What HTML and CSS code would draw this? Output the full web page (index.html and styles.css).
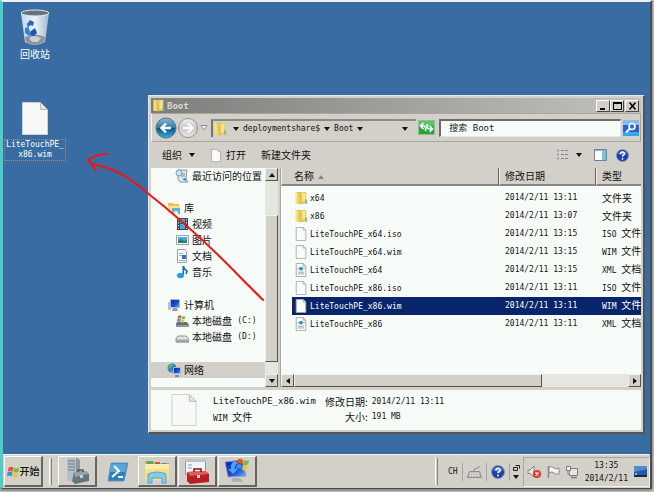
FILE: index.html
```
<!DOCTYPE html>
<html lang="zh-CN">
<head>
<meta charset="utf-8">
<title>Boot</title>
<link rel="stylesheet" href="styles.css">
</head>
<body>
<!-- 公用图标 -->
<svg class="defs" width="0" height="0">
  <defs>
    <linearGradient id="gold" x1="0" x2="1"><stop offset="0" stop-color="#f9ec9b"/><stop offset="1" stop-color="#dfb93f"/></linearGradient>
    <linearGradient id="glass" x1="0" x2="1"><stop offset="0" stop-color="#c4dcf0"/><stop offset=".5" stop-color="#f4f9fd"/><stop offset="1" stop-color="#a9bccb"/></linearGradient>
    <linearGradient id="ball" x1="0" x2="0" y1="0" y2="1"><stop offset="0" stop-color="#8fbad6"/><stop offset=".48" stop-color="#2f7ba9"/><stop offset=".52" stop-color="#0d5588"/><stop offset="1" stop-color="#35b3dc"/></linearGradient>
    <linearGradient id="grayball" x1="0" x2="0" y1="0" y2="1"><stop offset="0" stop-color="#eeeeec"/><stop offset=".5" stop-color="#c9c9c7"/><stop offset="1" stop-color="#e6e6e4"/></linearGradient>
    <linearGradient id="screenblue" x1="0" x2="1" y2="1"><stop offset="0" stop-color="#0a1fa8"/><stop offset=".6" stop-color="#1c4fe0"/><stop offset="1" stop-color="#6fb4ff"/></linearGradient>
  </defs>
  <symbol id="folder" viewBox="0 0 16 16">
    <path d="M2 1h5l1 2v12l-6-1z" fill="#e3bd48"/>
    <path d="M7 1h7v13l-6 1z" fill="#e6c658"/>
    <path d="M2 1l6 2v12l-6-1z" fill="url(#gold)"/>
    <path d="M9 2h4v10H9z" fill="#f6e48f"/>
    <path d="M13 9l2 1v4l-2 1z" fill="#79b3a0"/>
  </symbol>
  <symbol id="page" viewBox="0 0 16 16">
    <path d="M2.500.500h8l3 3v12h-11z" fill="#fbfbfa" stroke="#a8a8aa"/>
    <path d="M10.500.500v3h3" fill="#e6e6e6" stroke="#a8a8aa"/>
  </symbol>
  <symbol id="xml" viewBox="0 0 16 16">
    <path d="M2.500.500h8l3 3v12h-11z" fill="#fbfbfa" stroke="#a0a0a4"/>
    <path d="M10.500.500v3h3" fill="#e6e6e6" stroke="#a0a0a4"/>
    <path d="M3.500 6.500h2M10.500 6.500h2M4.500 10.500h7M4.500 12.500h7" stroke="#8a9cb8"/>
    <circle cx="8" cy="6.500" r="2.200" fill="#20a09a"/>
  </symbol>
  <symbol id="bigpage" viewBox="0 0 26 33">
    <path d="M.500.500h18l7 7v25H.500z" fill="#f8f8f6" stroke="#cfcfcd"/>
    <path d="M18.500.500v7h7z" fill="#e4e4e2" stroke="#b8b8b6"/>
  </symbol>
  <symbol id="help" viewBox="0 0 14 14">
    <circle cx="7" cy="7" r="6.500" fill="#1c3fae" stroke="#8795b8"/>
    <path d="M2 5a5.500 4.500 0 0 1 10 0q-5 3-10 0" fill="#5f86dc"/>
    <path d="M5 5.300a2 1.900 0 1 1 3 1.500q-1 .6-1 1.500" fill="none" stroke="#fff" stroke-width="1.600"/>
    <circle cx="7" cy="10.500" r="1" fill="#fff"/>
  </symbol>
  <symbol id="winflag" viewBox="0 0 16 16">
    <path d="M2 3q3-2 6 0l-1 5q-3-2-6 0z" fill="#e8532a"/>
    <path d="M9 3.400q3 2 6 0l-1 5q-3 2-6 0z" fill="#7cba3a"/>
    <path d="M.800 9q3-2 6 0l-1 5q-3-2-6 0z" fill="#3f8be0"/>
    <path d="M7.800 9.400q3 2 6 0l-1 5q-3 2-6 0z" fill="#f7c42c"/>
  </symbol>
</svg>

<div class="screen">
  <main class="desktop">
    <button class="shortcut bin">
      <svg width="30" height="37" viewBox="0 0 30 37">
        <path d="M1 4l4 29q10 6 20 0l4-29z" fill="url(#glass)" opacity=".95"/>
        <path d="M5 28l1 5q9 6 18 0l1-5q-10-5-20 0z" fill="#8d9399"/>
        <path d="M9 29q5-4 12 0l-3 4h-6z" fill="#c9ced2"/>
        <ellipse cx="15" cy="4" rx="14" ry="3" fill="#66737e" stroke="#e4e9ec"/>
        <path d="M7 15l3-4 4 2-1 4-3-1-2 3z" fill="#2a66c8"/>
        <path d="M5 19l3-1 3 6-2 3-4-3z" fill="#3c7ede"/>
        <path d="M11 22l4-3 2 5-3 3-4-1z" fill="#1d55b8"/>
      </svg>
      <span class="label">回收站</span>
    </button>
    <button class="shortcut wim">
      <svg width="26" height="33"><use href="#bigpage"/></svg>
      <span class="label en focused">LiteTouchPE_<br>x86.wim</span>
    </button>

    <section class="window">
      <header class="titlebar">
        <svg width="13" height="13"><use href="#folder"/></svg>
        <h1 class="caption">Boot</h1>
        <button class="ctl" aria-label="最小化"><svg width="9" height="8"><path d="M1 6h5v2H1z"/></svg></button>
        <button class="ctl" aria-label="最大化"><svg width="9" height="8"><path d="M0 0h9v8H0zM1 2v5h7V2z" fill-rule="evenodd"/></svg></button>
        <button class="ctl close" aria-label="关闭"><svg width="9" height="8"><path d="M1.500.500l6 7M7.500.500l-6 7" stroke="#000" stroke-width="1.500"/></svg></button>
      </header>

      <nav class="navbar">
        <button class="plain" aria-label="后退"><svg width="22" height="22" viewBox="0 0 22 22"><circle cx="11" cy="11" r="10" fill="url(#ball)" stroke="#5b7486"/><path d="M16 11H7M11 6.500L6.500 11l4.500 4.500" fill="none" stroke="#fff" stroke-width="2.400"/></svg></button>
        <button class="plain" aria-label="前进"><svg width="22" height="22" viewBox="0 0 22 22"><circle cx="11" cy="11" r="9.500" fill="url(#grayball)" stroke="#92928f"/><path d="M6 11h9M11 6.500l4.500 4.500-4.500 4.500" fill="none" stroke="#f8f8f8" stroke-width="2.400"/></svg></button>
        <button class="plain history" aria-label="历史"><svg width="8" height="6"><path d="M1 .500h6L4 5z" fill="#f4f6fa" stroke="#8490a8"/></svg></button>
        <div class="address">
          <svg width="14" height="14"><use href="#folder"/></svg>
          <i class="down"></i>
          <button class="plain crumb en">deploymentshare$</button>
          <i class="down"></i>
          <button class="plain crumb en">Boot</button>
          <i class="down"></i>
          <button class="plain drop" aria-label="地址列表"><i class="down"></i></button>
        </div>
        <button class="plain" aria-label="刷新"><svg width="17" height="15" viewBox="0 0 17 15"><path d="M.500.500h16v14H.500z" fill="#22a83a" stroke="#9fb39f"/><path d="M1 1h15v5H1z" fill="#58c765"/><path d="M7.500 11q1-5-2-5H4M5.500 3L2.500 6l3 3M9.500 4q-1 5 2 5H13M11.500 6l3 3-3 3" fill="none" stroke="#fff" stroke-width="1.700"/></svg></button>
        <input class="search" type="search" placeholder="搜索 Boot" aria-label="搜索 Boot">
        <button class="plain" aria-label="搜索"><svg width="16" height="16" viewBox="0 0 16 16"><path d="M0 0h16v16H0z" fill="#2763cf"/><path d="M0 0h16v5H0z" fill="#8db8ee"/><path d="M0 12h16v4H0z" fill="#35a5ee"/><circle cx="9" cy="6.500" r="3" fill="#3c6fd0" stroke="#fff" stroke-width="1.600"/><path d="M7 8.500L3 12.500" stroke="#fff" stroke-width="2"/></svg></button>
      </nav>

      <div class="toolbar">
        <button class="plain">组织 <i class="down"></i></button>
        <button class="plain open"><svg width="12" height="13" viewBox="1 0 14 16"><use href="#page" width="16" height="16"/></svg>打开</button>
        <button class="plain">新建文件夹</button>
        <span class="views">
          <button class="plain" aria-label="视图"><svg width="13" height="12" viewBox="0 0 13 12"><path d="M1 1.500h2M1 9.500h2" stroke="#8aa4c8" stroke-width="2"/><path d="M1 5.500h2" stroke="#d09090" stroke-width="2"/><path d="M5 1.500h3M9 1.500h3M5 5.500h3M9 5.500h3M5 9.500h3M9 9.500h3" stroke="#7d8794"/></svg></button>
          <button class="plain" aria-label="更多视图"><i class="down"></i></button>
          <button class="plain preview" aria-label="预览窗格"><svg width="13" height="12" viewBox="0 0 13 12"><path d="M.500.500h12v11H.500z" fill="#fff" stroke="#68849c"/><path d="M8 2h4v9H8z" fill="#72c3e4"/><path d="M1 1.500h11" stroke="#9db8cc"/></svg></button>
          <button class="plain" aria-label="帮助"><svg width="13" height="13"><use href="#help"/></svg></button>
        </span>
      </div>

      <div class="panes">
        <div class="tree">
          <ul class="group">
            <li class="child"><svg width="14" height="14" viewBox="0 0 14 14"><path d="M3 1h9l-1 9 2 3H5L3 10z" fill="#dfe6ec" stroke="#8898a4"/><path d="M6 5h4M6 7h4" stroke="#7d93a4"/><circle cx="4" cy="4" r="3" fill="#cbe4f2" stroke="#7f9fb2"/><path d="M7 10l4-1v3z" fill="#2c8fd0"/></svg>最近访问的位置</li>
          </ul>
          <ul class="group">
            <li><svg width="14" height="14" viewBox="0 0 14 14"><path d="M1 2h5l1 1h5v9H1z" fill="#e8c352"/><path d="M1 5h12v7H1z" fill="#f7e490"/><path d="M5 7h8v6h-2v-3H7v3H5z" fill="#5eb2e2"/></svg>库</li>
            <li class="child"><svg width="14" height="14" viewBox="0 0 14 14"><path d="M2 1h11v12H2z" fill="#394450"/><path d="M5 2h5v4H5zM5 7h5v5H5z" fill="#4aa6dd"/><path d="M3.500 2v10M11.500 2v10" stroke="#d4d9dc" stroke-dasharray="1.500 1.500"/></svg>视频</li>
            <li class="child"><svg width="14" height="14" viewBox="0 0 14 14"><path d="M1.500 2.500h12v9h-12z" fill="#fff" stroke="#98a4ac"/><path d="M3 4h9v6H3z" fill="#48a8e0"/><path d="M3 8l3-2 3 2 3-1v3H3z" fill="#2b7d66"/></svg>图片</li>
            <li class="child"><svg width="14" height="14" viewBox="0 0 14 14"><path d="M2.500.500h7l2 2v11h-9z" fill="#fcfdfd" stroke="#98a4ac"/><path d="M4 4.500h4M4 6.500h3M4 11.500h6" stroke="#98b0c8"/><path d="M7 6h4v4H7z" fill="#2f73b8"/></svg>文档</li>
            <li class="child"><svg width="14" height="14" viewBox="0 0 14 14"><path d="M8.500 1q0 3 3.500 5-1 3-1 3" fill="none" stroke="#1b75d0" stroke-width="1.600"/><path d="M8.300 1v9" stroke="#1668c4" stroke-width="1.600"/><ellipse cx="5.500" cy="10.500" rx="3.500" ry="2.800" fill="#2b9ae8"/></svg>音乐</li>
          </ul>
          <ul class="group">
            <li><svg width="14" height="14" viewBox="0 0 14 14"><path d="M1 4h3v8H1z" fill="#b9c0c8"/><path d="M3.500 1.500h9v8h-9z" fill="url(#screenblue)" stroke="#b0b8c4"/><path d="M6 10h4l1 3H5z" fill="#949ca8"/></svg>计算机</li>
            <li class="child"><svg width="14" height="14" viewBox="0 0 14 14"><path d="M2 8h10l2 3v2H1v-3z" fill="#5f7078"/><path d="M1 11h13v2H1z" fill="#8a9aa0"/><path d="M11 11.500h2" stroke="#50d060"/><use href="#winflag" x="2" y="0" width="9" height="9"/></svg>本地磁盘&nbsp;<span class="en">(C:)</span></li>
            <li class="child"><svg width="14" height="14" viewBox="0 0 14 14"><path d="M3 6h8l3 3v3H1V9z" fill="#e3e5e5" stroke="#8d9292"/><path d="M1 9.500h13v3H1z" fill="#9fa3a3"/><path d="M10.500 11h2" stroke="#40d050"/></svg>本地磁盘&nbsp;<span class="en">(D:)</span></li>
          </ul>
          <ul class="group">
            <li class="current"><svg width="14" height="14" viewBox="0 0 14 14"><circle cx="5" cy="5" r="4.500" fill="#2a80d8"/><path d="M2 2q3-2 4 0l-2 3-3 1zM3 7l3 1-1 2z" fill="#4cc050"/><path d="M6.500 4.500h7v6h-7z" fill="url(#screenblue)" stroke="#a5b4d0"/><path d="M8 12h4v2H8z" fill="#7888a8"/></svg>网络</li>
          </ul>
        </div>
        <div class="scroll vertical">
          <button class="arrow" aria-label="向上"><i class="up"></i></button>
          <span class="thumb"></span>
          <button class="arrow" aria-label="向下"><i class="down"></i></button>
        </div>

        <div class="list">
          <table class="files">
            <colgroup><col><col class="date"><col class="type"></colgroup>
            <thead>
              <tr><th>名称 <i class="up sort"></i></th><th>修改日期</th><th>类型</th></tr>
            </thead>
            <tbody>
              <tr><td><svg width="14" height="14"><use href="#folder"/></svg><span class="en">x64</span></td><td class="en">2014/2/11 13:11</td><td>文件夹</td></tr>
              <tr><td><svg width="14" height="14"><use href="#folder"/></svg><span class="en">x86</span></td><td class="en">2014/2/11 13:07</td><td>文件夹</td></tr>
              <tr><td><svg width="14" height="14"><use href="#page"/></svg><span class="en">LiteTouchPE_x64.iso</span></td><td class="en">2014/2/11 13:15</td><td><span class="en">ISO </span>文件</td></tr>
              <tr><td><svg width="14" height="14"><use href="#page"/></svg><span class="en">LiteTouchPE_x64.wim</span></td><td class="en">2014/2/11 13:15</td><td><span class="en">WIM </span>文件</td></tr>
              <tr><td><svg width="14" height="14"><use href="#xml"/></svg><span class="en">LiteTouchPE_x64</span></td><td class="en">2014/2/11 13:15</td><td><span class="en">XML </span>文档</td></tr>
              <tr><td><svg width="14" height="14"><use href="#page"/></svg><span class="en">LiteTouchPE_x86.iso</span></td><td class="en">2014/2/11 13:11</td><td><span class="en">ISO </span>文件</td></tr>
              <tr class="selected"><td><svg width="14" height="14"><use href="#page"/></svg><span class="en">LiteTouchPE_x86.wim</span></td><td class="en">2014/2/11 13:11</td><td><span class="en">WIM </span>文件</td></tr>
              <tr><td><svg width="14" height="14"><use href="#xml"/></svg><span class="en">LiteTouchPE_x86</span></td><td class="en">2014/2/11 13:11</td><td><span class="en">XML </span>文档</td></tr>
            </tbody>
          </table>
          <div class="scroll horizontal">
            <button class="arrow" aria-label="向左"><i class="left"></i></button>
            <span class="thumb"></span>
            <button class="arrow" aria-label="向右"><i class="right"></i></button>
          </div>
        </div>
      </div>

      <footer class="details">
        <svg width="26" height="32"><use href="#bigpage"/></svg>
        <div class="props">
          <span class="en name">LiteTouchPE_x86.wim</span><span class="key">修改日期:</span><span class="en">2014/2/11 13:11</span>
          <span><span class="en">WIM </span>文件</span><span class="key">大小:</span><span class="en">191 MB</span>
        </div>
      </footer>
    </section>

    <!-- 手绘的红色箭头 -->
    <svg class="pointer" width="180" height="152" viewBox="86 150 180 152" fill="none" stroke="#f01414" stroke-width="2" stroke-linecap="round">
      <path d="M263 300L242 279Q196 231 145 191Q122 170 93 164"/>
      <path d="M107 154Q96 154 88 160Q92 164 96 171"/>
    </svg>
  </main>

  <footer class="taskbar">
    <button class="raised start"><svg width="13" height="13"><use href="#winflag"/></svg>开始</button>
    <span class="grip"></span>
    <div class="tasks">
      <button class="raised" aria-label="服务器管理器"><svg width="26" height="28" viewBox="0 0 26 28"><path d="M3 1h10l3 2v20l-3 1H3z" fill="#8d9aa0"/><path d="M3 1h9v23H3z" fill="#b4c0c4"/><path d="M4 4h7M4 7h7M4 10h7M4 13h7" stroke="#667680"/><path d="M10 15l12-1 3 3v7l-14 3-3-3z" fill="#65757e"/><path d="M10 15l12-1 3 3-14 3z" fill="#93a3ac"/><path d="M14 15v-2h5v2" fill="none" stroke="#4a5860" stroke-width="1.500"/><path d="M16 18h3v3h-3z" fill="#c9d2d6"/></svg></button>
      <button class="flat" aria-label="PowerShell"><svg width="22" height="20" viewBox="0 0 22 20"><path d="M4 1h17l-4 18H1z" fill="#2f7fb8" stroke="#5c9cc8"/><path d="M4 2h16l-2 8H3z" fill="#5aa6d8"/><path d="M7 4l5 5-7 6M11 15h5" fill="none" stroke="#fff" stroke-width="2"/></svg></button>
      <button class="raised" aria-label="资源管理器"><svg width="28" height="26" viewBox="0 0 28 26"><path d="M2 3h8l2 2h14v17H2z" fill="#d9ac45"/><path d="M4 3h6v3H4z" fill="#4fae58"/><path d="M12 4h5v3h-5z" fill="#d85040"/><path d="M19 5h5v3h-5z" fill="#4b8dd8"/><path d="M2 6h24v16H2z" fill="#f5e08a"/><path d="M2 6h24v5H2z" fill="#faedb0"/><path d="M5 16q9-4 18 0v9h-4v-5H9v5H5z" fill="#86c9e8" stroke="#4fa4cc"/></svg></button>
      <button class="raised" aria-label="部署工作台"><svg width="26" height="28" viewBox="0 0 26 28"><path d="M1.500 2.500h20v15h-20z" fill="#f4f5f5" stroke="#8d98a0"/><path d="M1 2h21v3H1z" fill="#b8c4cc"/><path d="M4 8h4M4 11h4" stroke="#8898a0"/><path d="M3 15l18-1 4 3v8L6 27l-3-3z" fill="#b81e22"/><path d="M3 15l18-1 4 3-19 2z" fill="#e25a50"/><path d="M10 15v-3h7v3" fill="none" stroke="#7d1418" stroke-width="1.500"/><path d="M13 18h3v3h-3z" fill="#d8d8d8"/></svg></button>
      <button class="raised" aria-label="远程安装"><svg width="26" height="28" viewBox="0 0 26 28"><path d="M1 5l17-2 4 16-18 1z" fill="url(#screenblue)" stroke="#8c9cbc"/><path d="M9 21h7l3 4H7z" fill="#a8b0bc"/><path d="M11 4q-5 2-4 8H4l5 5 5-5h-3q-1-4 3-6z" fill="#4aa4f0"/><use href="#winflag" x="12" y="0" width="14" height="14"/></svg></button>
    </div>
    <span class="grip"></span>
    <div class="lang">
      <button class="plain en">CH</button>
      <button class="plain" aria-label="输入法"><svg width="15" height="14" viewBox="0 0 15 14"><path d="M2.500 6.500h10l2 6h-14z" fill="#bcbcba" stroke="#8c8c8a"/><path d="M3 8.500h9M2.500 10.500h10" stroke="#ececea" stroke-dasharray="1.500 1"/><path d="M7 6q0-3 3-3t2-2" fill="none" stroke="#8c8c8a"/></svg></button>
      <button class="plain" aria-label="帮助"><svg width="14" height="14"><use href="#help"/></svg></button>
      <button class="plain restore" aria-label="选项"><svg width="7" height="6"><path d="M2.500.500h4v3M.500 2.500h4v3h-4z" fill="none" stroke="#222"/></svg><i class="down"></i></button>
    </div>
    <div class="tray">
      <button class="plain" aria-label="音量"><svg width="15" height="14" viewBox="0 0 15 14"><path d="M1 5h2l4-4v11L3 8.500H1z" fill="#e8e8e6" stroke="#858583"/><circle cx="10" cy="9" r="4" fill="#dc3a30"/><path d="M8.500 7.500l3 3M11.500 7.500l-3 3" stroke="#fff" stroke-width="1.300"/></svg></button>
      <button class="plain" aria-label="操作中心"><svg width="15" height="14" viewBox="0 0 15 14"><path d="M2.500 1v12" stroke="#8a8a88" stroke-width="1.500"/><path d="M3 2q3-1 5 1t5 0v6q-3 1-5-1T3 8z" fill="#f4f4f2" stroke="#8a8a88"/></svg></button>
      <button class="plain" aria-label="网络"><svg width="14" height="14" viewBox="0 0 14 14"><path d="M4.500 3.500h8v7h-8z" fill="#e6e6e4" stroke="#7c7c7a"/><path d="M6 12.500h6" stroke="#7c7c7a" stroke-width="1.500"/><path d="M1.500 1.500h4v4h-4zM3 5v4h2" fill="#f0f0ee" stroke="#7c7c7a"/></svg></button>
      <time class="clock en">13:35<br>2014/2/11</time>
      <button class="plain" aria-label="显示桌面"><svg width="13" height="11" viewBox="0 0 13 11"><path d="M0 0h13v9H0z" fill="#1f5da8"/><path d="M0 0h13v3L0 6z" fill="#4d8ed0"/><path d="M0 9h13v2H0z" fill="#1a2c44"/><path d="M1 8h2" stroke="#fff"/></svg></button>
    </div>
  </footer>
</div>
</body>
</html>
```

FILE: styles.css
```
* { box-sizing: border-box; }

body {
  margin: 0;
  height: 100vh;
  overflow: hidden;
  background: #c4c4c4;
  color: #111;
  font: 10px/12px "Noto Sans CJK SC", sans-serif;
}

.defs { position: absolute; }

button, input {
  font: inherit;
  color: inherit;
}

svg { flex: none; display: block; }

/* 西文等宽字体 */
.en {
  font-family: "DejaVu Sans Mono", monospace;
  font-size: 8px;
  white-space: pre;
}

.plain, .flat {
  display: flex;
  align-items: center;
  padding: 0;
  border: 0;
  background: none;
}

/* 小三角 */
.down, .up, .left, .right {
  display: inline-block;
  border: 3px solid transparent;
}
.down { border-top: 4px solid #111; border-bottom: 0; }
.up { border-bottom: 4px solid #111; border-top: 0; }
.left { border-right: 4px solid #111; border-left: 0; }
.right { border-left: 4px solid #111; border-right: 0; }

.screen {
  display: flex;
  flex-direction: column;
  height: calc(100vh - 3px);
  margin-right: 2px;
  border: 2px solid #4a4a4a;
  border-left: 3px solid #50ccc8;
  border-top-color: #f0f0f0;
  border-bottom-width: 1px;
  box-shadow: 0 1px 3px #666;
}

/* ---- 桌面 ---- */
.desktop {
  flex: 1;
  position: relative;
  background: #386ca2;
}

.shortcut {
  position: absolute;
  left: 0;
  width: 64px;
  display: flex;
  flex-direction: column;
  align-items: center;
  gap: 4px;
  padding: 0;
  border: 0;
  background: none;
  color: #fff;
}
.bin { top: 7px; gap: 2px; }
.wim { top: 100px; }
.label { padding: 0 1px; }
.focused {
  border: 1px dotted #a08a78;
  line-height: 10px;
}

/* ---- 窗口 ---- */
.window {
  position: absolute;
  left: 145px;
  right: 5px;
  top: 93px;
  bottom: 20px;
  display: flex;
  flex-direction: column;
  padding: 2px;
  background: #d2d0c8;
  border: 1px solid #e8e8e4;
  border-right: 2px solid #55534e;
  border-bottom: 2px solid #55534e;
}

.titlebar {
  display: flex;
  align-items: center;
  height: 15px;
  padding: 0 2px 0 1px;
  background: linear-gradient(90deg, #7d7d7d, #c2c2c0);
}
.caption {
  flex: 1;
  margin: 0 0 0 2px;
  font: bold 9px/12px "DejaVu Sans Mono", monospace;
  color: #dcdad4;
}
.ctl {
  display: flex;
  align-items: center;
  justify-content: center;
  width: 14px;
  height: 12px;
  padding: 0;
  background: #d2d0c8;
  border: 1px solid #fff;
  border-right-color: #444;
  border-bottom-color: #444;
}
.close { margin-left: 1px; }

.navbar {
  display: flex;
  align-items: center;
  height: 29px;
  padding: 0 1px 0 3px;
  border: 1px solid #a8a6a0;
  border-left-color: #f4f4f0;
  border-bottom-color: #a8a6a0;
}
.history { margin: 0 3px 0 1px; }
.address {
  flex: 5;
  display: flex;
  align-items: center;
  gap: 6px;
  height: 18px;
  margin-right: 2px;
  border-left: 2px solid #77756f;
  border-top: 2px solid #8c8a84;
}
.address .crumb { margin: 0 -2px; }
.drop { margin: 0 8px 0 auto; }
.search {
  flex: 4;
  min-width: 0;
  height: 18px;
  margin: 0 2px 0 4px;
  padding: 0 8px;
  border: 2px solid #6e6c68;
  border-right: 1px solid #e8e6e0;
  border-bottom: 1px solid #e8e6e0;
  border-radius: 0;
  background: #f8fcf8;
  font: 9px/12px "DejaVu Sans Mono", "Noto Sans CJK SC", monospace;
}
.search::placeholder { color: #222; opacity: 1; }

.toolbar {
  display: flex;
  align-items: center;
  gap: 15px;
  height: 26px;
  padding: 0 12px 0 11px;
}
.toolbar .down { margin-left: 7px; }
.open { gap: 4px; }
.views {
  display: flex;
  align-items: center;
  margin-left: auto;
}
.preview { margin: 0 9px 0 12px; }

.panes {
  flex: 1;
  display: flex;
  min-height: 0;
}

/* ---- 导航树 ---- */
.tree {
  width: 114px;
  overflow: hidden;
  background: #f8fcf8;
}
.group {
  margin: 0 0 17px;
  padding: 0;
  list-style: none;
}
.group:first-child { margin-bottom: 16px; }
.tree li {
  display: flex;
  align-items: center;
  gap: 3px;
  height: 16px;
  padding-left: 16px;
  white-space: nowrap;
}
.tree .child { padding-left: 24px; }
.tree .current { background: #d2d0c8; }

/* ---- 滚动条 ---- */
.scroll {
  display: flex;
  background: #e6e6e0;
}
.vertical {
  flex-direction: column;
  width: 13px;
  margin-right: 2px;
}
.horizontal { height: 13px; }
.arrow, .thumb {
  background: #d2d0c8;
  border: 1px solid #f0f0ec;
  border-right-color: #55534e;
  border-bottom-color: #55534e;
}
.arrow {
  display: flex;
  align-items: center;
  justify-content: center;
  flex: none;
  width: 13px;
  height: 13px;
  padding: 0;
}
.vertical .thumb { height: 67%; margin-top: auto; }
.vertical .arrow:last-child { margin-top: 12px; }
.horizontal .thumb { width: 69%; }
.horizontal .arrow:last-child { margin-left: auto; }

/* ---- 文件列表 ---- */
.list {
  flex: 1;
  min-width: 0;
  display: flex;
  flex-direction: column;
  justify-content: space-between;
  background: #f8fcf8;
  border-left: 1px solid #a8a6a0;
}
.files {
  width: 100%;
  table-layout: fixed;
  border-collapse: separate;
  border-spacing: 0;
}
.date { width: 97px; }
.type { width: 45px; }
.files th {
  height: 18px;
  padding: 0 0 0 5px;
  background: #d2d0c8;
  border-left: 1px solid #f0f0ec;
  border-right: 1px solid #66645f;
  border-bottom: 2px solid #88867f;
  font-weight: normal;
  text-align: left;
  white-space: nowrap;
}
.files th:first-child { padding-left: 12px; }
.files th:last-child { border-right: 0; }
.sort { margin-left: 2px; border-bottom-color: #888; vertical-align: 1px; }
.files tbody::before {
  content: "";
  display: block;
  height: 3px;
}
.files td {
  height: 18px;
  padding: 0 0 0 6px;
  overflow: hidden;
  white-space: nowrap;
}
.files td:first-child {
  border-left: 11px solid transparent;
  padding-left: 2px;
  background-clip: padding-box;
}
.files td svg {
  display: inline-block;
  margin-right: 2px;
  vertical-align: middle;
}
.selected td {
  background-color: #08246b;
  color: #fff;
}

/* ---- 详细信息 ---- */
.details {
  display: flex;
  align-items: flex-start;
  gap: 16px;
  height: 43px;
  padding: 4px 0 0 20px;
  border-top: 3px solid #d2d0c8;
  background: #f8fcf8;
}
.props {
  display: grid;
  grid-template-columns: 108px auto auto;
  column-gap: 4px;
  line-height: 15px;
}
.name { font-size: 9px; }
.key { text-align: right; }

.pointer {
  position: absolute;
  left: 83px;
  top: 148px;
  pointer-events: none;
}

/* ---- 任务栏 ---- */
.taskbar {
  display: flex;
  align-items: center;
  height: 34px;
  padding: 0 0 0 1px;
  background: #d2d0c8;
  border-top: 1px solid #f0f0ec;
}
.raised {
  display: flex;
  align-items: center;
  justify-content: center;
  height: 31px;
  padding: 0;
  background: #d2d0c8;
  border: 1px solid #fff;
  border-right: 2px solid #66645f;
  border-bottom: 2px solid #66645f;
}
.start {
  width: 39px;
  font-weight: 500;
}
.grip {
  width: 3px;
  height: 27px;
  margin: 0 6px;
  border-left: 1px solid #fff;
  border-right: 1px solid #88867f;
}
.tasks {
  flex: 1;
  display: flex;
  gap: 1px;
}
.tasks button {
  width: 39px;
  justify-content: center;
}
.lang { display: flex; }
.lang button {
  height: 18px;
  padding: 0 4px;
  border-right: 1px solid #a8a6a0;
}
.lang .restore {
  flex-direction: column;
  justify-content: center;
  gap: 4px;
  padding: 0 3px;
  border-right: 0;
}
.tray {
  display: flex;
  align-items: center;
  gap: 4px;
  height: 30px;
  padding: 0 2px 0 3px;
  border: 1px solid #a8a6a0;
  border-right-color: #f0f0ec;
  border-bottom-color: #f0f0ec;
}
.clock {
  padding: 0 2px;
  line-height: 13px;
  text-align: center;
}
```
